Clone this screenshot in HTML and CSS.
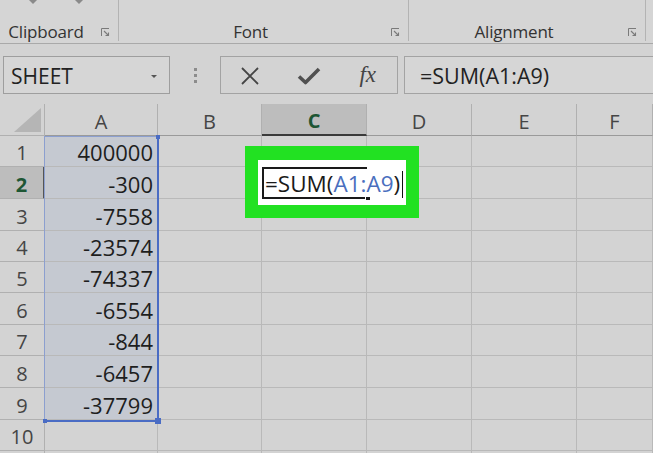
FILE: index.html
```html
<!DOCTYPE html>
<html>
<head>
<meta charset="utf-8">
<link rel="stylesheet" href="styles.css">
</head>
<body>
<div class="ribbon">
  <div class="group g-clip">
    <div class="carets"><span class="caret c1"></span><span class="caret c2"></span></div>
    <div class="glabel"><span class="lbl">Clipboard</span><span class="launch"><svg width="9" height="9" viewBox="0 0 9 9"><path d="M0.5 8V0.5H8" fill="none" stroke="#7a7a7a" stroke-width="1"/><path d="M3 3L7.5 7.5M4.5 7.5H7.5V4.5" fill="none" stroke="#7a7a7a" stroke-width="1.1"/></svg></span></div>
  </div>
  <div class="group g-font">
    <div class="carets"></div>
    <div class="glabel"><span class="lbl">Font</span><span class="launch"><svg width="9" height="9" viewBox="0 0 9 9"><path d="M0.5 8V0.5H8" fill="none" stroke="#7a7a7a" stroke-width="1"/><path d="M3 3L7.5 7.5M4.5 7.5H7.5V4.5" fill="none" stroke="#7a7a7a" stroke-width="1.1"/></svg></span></div>
  </div>
  <div class="group g-align">
    <div class="carets"></div>
    <div class="glabel"><span class="lbl">Alignment</span><span class="launch"><svg width="9" height="9" viewBox="0 0 9 9"><path d="M0.5 8V0.5H8" fill="none" stroke="#7a7a7a" stroke-width="1"/><path d="M3 3L7.5 7.5M4.5 7.5H7.5V4.5" fill="none" stroke="#7a7a7a" stroke-width="1.1"/></svg></span></div>
  </div>
  <div class="group g-rest"></div>
</div>

<div class="fbar">
  <div class="namebox"><span>SHEET</span><span class="nb-arrow"></span></div>
  <div class="grip"><i></i><i></i><i></i></div>
  <div class="btns">
    <span class="btn"><svg width="22" height="18" viewBox="0 0 22 18"><path d="M3 1L19 17M19 1L3 17" stroke="#454545" stroke-width="1.8" fill="none"/></svg></span>
    <span class="btn"><svg width="24" height="18" viewBox="0 0 24 18"><path d="M2 9.5L8.5 15.5L22 2" stroke="#505050" stroke-width="3.6" fill="none" stroke-linejoin="round"/></svg></span>
    <span class="btn fx">fx</span>
  </div>
  <div class="formula">=SUM(A1:A9)</div>
</div>

<div class="sheet">
  <div class="hd corner"><span class="tri"></span></div>
  <div class="hd col">A</div>
  <div class="hd col">B</div>
  <div class="hd col act">C</div>
  <div class="hd col">D</div>
  <div class="hd col">E</div>
  <div class="hd col">F</div>

  <div class="hd row">1</div><div class="c sel">400000</div><div class="c"></div><div class="c"></div><div class="c"></div><div class="c"></div><div class="c"></div>
  <div class="hd row act">2</div><div class="c sel">-300</div><div class="c"></div><div class="c"></div><div class="c"></div><div class="c"></div><div class="c"></div>
  <div class="hd row">3</div><div class="c sel">-7558</div><div class="c"></div><div class="c"></div><div class="c"></div><div class="c"></div><div class="c"></div>
  <div class="hd row">4</div><div class="c sel">-23574</div><div class="c"></div><div class="c"></div><div class="c"></div><div class="c"></div><div class="c"></div>
  <div class="hd row">5</div><div class="c sel">-74337</div><div class="c"></div><div class="c"></div><div class="c"></div><div class="c"></div><div class="c"></div>
  <div class="hd row">6</div><div class="c sel">-6554</div><div class="c"></div><div class="c"></div><div class="c"></div><div class="c"></div><div class="c"></div>
  <div class="hd row">7</div><div class="c sel">-844</div><div class="c"></div><div class="c"></div><div class="c"></div><div class="c"></div><div class="c"></div>
  <div class="hd row">8</div><div class="c sel">-6457</div><div class="c"></div><div class="c"></div><div class="c"></div><div class="c"></div><div class="c"></div>
  <div class="hd row">9</div><div class="c sel">-37799</div><div class="c"></div><div class="c"></div><div class="c"></div><div class="c"></div><div class="c"></div>
  <div class="hd row">10</div><div class="c"></div><div class="c"></div><div class="c"></div><div class="c"></div><div class="c"></div><div class="c"></div>
  <div class="hd row"></div><div class="c"></div><div class="c"></div><div class="c"></div><div class="c"></div><div class="c"></div><div class="c"></div>

  <div class="range"><span class="h h-tr"></span><span class="h h-bl"></span><span class="h h-br"></span></div>

  <div class="callout">
    <div class="paper">
      <div class="editor"><span class="t-black">=SUM(</span><span class="t-blue">A1:A9</span><span class="t-black">)</span><span class="caretline"></span><span class="fill"></span></div>
    </div>
  </div>
</div>
</body>
</html>
```

FILE: styles.css
```css
* { box-sizing: border-box; }

body {
  margin: 0;
  width: 653px;
  height: 453px;
  overflow: hidden;
  background: #d3d3d3;
  font-family: "Open Sans", "Noto Sans", sans-serif;
  color: #222;
}

/* ribbon */
.ribbon {
  display: flex;
  height: 44px;
  border-bottom: 1px solid #a9a9a9;
  background: #d5d5d5;
}
.group {
  height: 41px;
  display: flex;
  flex-direction: column;
  justify-content: space-between;
  border-right: 1px solid #b3b3b3;
}
.g-clip { width: 119px; }
.g-font { width: 290px; }
.g-align { width: 237px; }
.g-rest { flex: 1; border-right: none; }

.carets { height: 6px; position: relative; }
.caret {
  position: absolute;
  top: 0;
  width: 0;
  height: 0;
  border-left: 4px solid transparent;
  border-right: 4px solid transparent;
  border-top: 4px solid #8a8a8a;
}
.c1 { left: 29px; }
.c2 { left: 75px; }

.glabel {
  display: flex;
  align-items: center;
  height: 22px;
  margin-bottom: -1px;
}
.lbl {
  flex: 1;
  text-align: center;
  font-size: 17px;
  color: #333;
  letter-spacing: -0.2px;
}
.launch {
  width: 26px;
  display: flex;
  justify-content: center;
  align-items: center;
  padding-top: 3px;
}

/* formula bar */
.fbar {
  display: flex;
  align-items: stretch;
  height: 60px;
  padding: 12px 0 10px 3px;
}
.namebox {
  width: 167px;
  border: 1px solid #9e9e9e;
  background: #d6d6d6;
  display: flex;
  align-items: center;
  justify-content: space-between;
  padding: 1px 12px 0 7px;
  font-size: 21px;
  color: #222;
}
.nb-arrow {
  width: 0;
  height: 0;
  border-left: 3px solid transparent;
  border-right: 3px solid transparent;
  border-top: 3px solid #555;
  margin-top: 1px;
}
.grip {
  width: 50px;
  display: flex;
  flex-direction: column;
  align-items: center;
  justify-content: center;
  gap: 3px;
}
.grip i {
  display: block;
  width: 3px;
  height: 3px;
  background: #8c8c8c;
}
.btns {
  width: 178px;
  border: 1px solid #a3a3a3;
  display: flex;
}
.btn {
  flex: 1;
  display: flex;
  align-items: center;
  justify-content: center;
  padding-top: 1px;
}
.fx {
  font-family: "Liberation Serif", "DejaVu Serif", serif;
  font-style: italic;
  font-size: 23px;
  color: #444;
  padding-bottom: 1px;
}
.formula {
  flex: 1;
  margin-left: 6px;
  margin-right: -4px;
  border: 1px solid #a3a3a3;
  background: #d6d6d6;
  font-size: 21.5px;
  display: flex;
  align-items: center;
  padding: 1px 0 0 15px;
  color: #222;
}

/* sheet */
.sheet {
  position: relative;
  display: grid;
  grid-template-columns: 45px 113px 104px 105px 105px 105px 76px;
  grid-template-rows: 32px 31px 32px 32px 31px 31px 32px 31px 32px 32px 31px 10px;
}
.hd {
  border-right: 1px solid #b0b0b0;
  border-bottom: 1px solid #b0b0b0;
  color: #454545;
  font-size: 20px;
  display: flex;
  align-items: center;
  justify-content: center;
}
.corner { position: relative; }
.tri {
  position: absolute;
  right: 3px;
  bottom: 3px;
  width: 0;
  height: 0;
  border-left: 27px solid transparent;
  border-bottom: 24px solid #b5b5b5;
}
.col { padding-top: 3px; border-bottom-color: #9a9a9a; }
.col.act {
  background: #bdbdbd;
  color: #1d5634;
  font-weight: 700;
  border-bottom: 2px solid #3a3a3a;
}
.row { padding-top: 3px; }
.row.act {
  background: #bdbdbd;
  color: #1d5634;
  font-weight: 700;
  border-right: 2px solid #555;
}
.c {
  border-right: 1px solid #b9b9b9;
  border-bottom: 1px solid #b9b9b9;
  font-size: 22px;
  line-height: 28px;
  display: flex;
  align-items: flex-end;
  justify-content: flex-end;
  padding-right: 4px;
  color: #1e1e1e;
}
.sel { background: #c5c9d1; }

.range {
  position: absolute;
  left: 44px;
  top: 32px;
  width: 115px;
  height: 286px;
  border: 1px solid #8c9fcf;
  border-right: 2px solid #4a6cc4;
  border-bottom: 2px solid #4a6cc4;
}
.h {
  position: absolute;
  width: 5px;
  height: 5px;
  background: #4a6cc4;
}
.h-tr { right: -3px; top: -2px; width: 4px; height: 4px; }
.h-bl { left: -2px; bottom: -3px; width: 4px; height: 4px; }
.h-br { right: -4px; bottom: -4px; width: 6px; height: 6px; }

.callout {
  position: absolute;
  left: 245px;
  top: 42px;
  width: 174px;
  height: 72px;
  background: #22e122;
  padding: 14px 13px 13px 13px;
}
.paper {
  background: #fff;
  height: 45px;
  padding: 7px 0 0 4px;
}
.editor {
  position: relative;
  width: 105px;
  height: 32px;
  border-top: 2px solid #1a1a1a;
  border-left: 2px solid #1a1a1a;
  border-bottom: 2px solid #1a1a1a;
  white-space: nowrap;
  font-size: 22.5px;
  line-height: 30px;
  padding-left: 1px;
}
.t-black { color: #1a1a1a; }
.t-blue { color: #4a6fbe; }
.caretline {
  display: inline-block;
  width: 1px;
  height: 27px;
  background: #111;
  vertical-align: -6px;
  margin-left: 2px;
}
.fill {
  position: absolute;
  right: -4px;
  bottom: -4px;
  width: 6px;
  height: 5px;
  background: #1a1a1a;
  border: 1px solid #fff;
}
```
